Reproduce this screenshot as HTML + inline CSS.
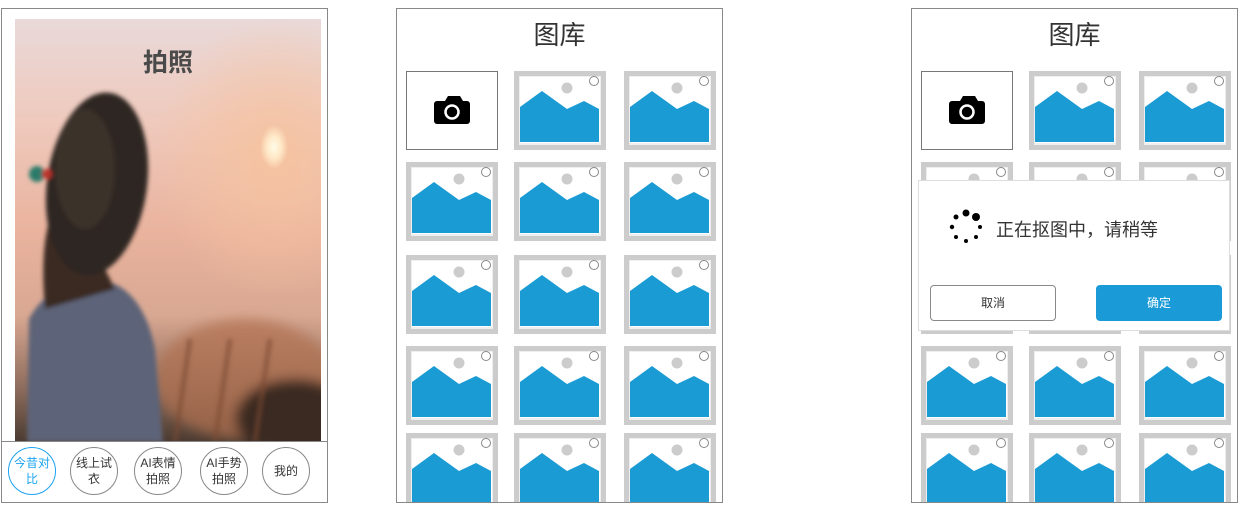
<!DOCTYPE html>
<html><head><meta charset="utf-8"><style>
*{margin:0;padding:0;box-sizing:border-box}
body{width:1242px;height:507px;background:#fff;position:relative;overflow:hidden;font-family:"Liberation Sans","Noto Sans CJK SC",sans-serif}
.panel{position:absolute;top:8px;width:327px;height:495px;border:1px solid #888;background:#fff;overflow:hidden}
.photo{position:absolute;left:13px;top:10px;width:306px;height:423px;overflow:hidden;
background:radial-gradient(ellipse 14px 22px at 259px 128px,#fffbe8 0%,#ffe9c8 50%,rgba(255,220,190,0) 100%),
radial-gradient(ellipse 120px 140px at 260px 140px,#f6c3a0 0%,rgba(240,180,150,0) 100%),
linear-gradient(180deg,#e9d9d8 0%,#efc9bc 25%,#e9b39e 50%,#d9a892 70%,#8a6a5a 88%,#4a3a30 100%)}
.title1{position:absolute;left:0;width:100%;top:24px;text-align:center;font-size:25px;font-weight:bold;color:#4a4a4a}
.nav{position:absolute;left:0;top:432px;width:100%;height:62px;border-top:1px solid #888}
.c{position:absolute;top:5px;width:48px;height:48px;border:1px solid #888;border-radius:50%;font-size:12px;line-height:16px;color:#333;display:flex;align-items:center;justify-content:center;text-align:center}
.t2{position:absolute;left:0;width:100%;top:6px;text-align:center;font-size:26px;color:#333}
.tile{position:absolute;width:92px;height:79px}
</style></head><body>
<div class="panel" style="left:1px">
 <div class="photo">
  <svg width="306" height="423" style="position:absolute;left:0;top:0">
   <defs><filter id="b"><feGaussianBlur stdDeviation="2"/></filter><filter id="b2"><feGaussianBlur stdDeviation="6"/></filter></defs>
   <g filter="url(#b2)"><ellipse cx="230" cy="360" rx="90" ry="60" fill="#b07050" opacity=".7"/><ellipse cx="280" cy="400" rx="60" ry="40" fill="#3a2a20"/></g>
   <g filter="url(#b)">
   <path d="M12 423 L14 300 Q30 270 60 266 L100 265 Q130 280 140 330 L148 423Z" fill="#5d6478"/>
   <path d="M30 290 Q25 230 35 200 L80 230 L100 270 Z" fill="#3a2a24"/>
   <ellipse cx="82" cy="165" rx="50" ry="92" fill="#2f2520" transform="rotate(8 82 165)"/>
   <ellipse cx="70" cy="150" rx="30" ry="60" fill="#3b302a"/>
   <circle cx="22" cy="155" r="8" fill="#2a7a6a"/><circle cx="32" cy="155" r="5" fill="#c0302a"/>
   </g>
   <g stroke="#7a4a30" stroke-width="5" opacity=".6" filter="url(#b)"><line x1="160" y1="423" x2="175" y2="320"/><line x1="200" y1="423" x2="215" y2="320"/><line x1="240" y1="423" x2="255" y2="320"/></g>
  </svg>
  <div class="title1">拍照</div>
 </div>
 <div class="nav">
  <div class="c" style="left:6px;border-color:#1aa3f0;color:#1aa3f0">今昔对<br>比</div>
  <div class="c" style="left:68px">线上试<br>衣</div>
  <div class="c" style="left:132px">AI表情<br>拍照</div>
  <div class="c" style="left:198px">AI手势<br>拍照</div>
  <div class="c" style="left:260px">我的</div>
 </div>
</div>
<div class="panel" style="left:396px" id="p2"><div class="t2">图库</div></div>
<div class="panel" style="left:911px" id="p3"><div class="t2">图库</div></div>
<div style="position:absolute;left:918px;top:180px;width:312px;height:151px;background:#fff;border:1px solid #ddd">
 <svg width="40" height="40" style="position:absolute;left:28px;top:27px" viewBox="0 0 40 40">
  <circle cx="19" cy="5" r="3.5"/><circle cx="29" cy="9" r="4"/><circle cx="9" cy="9" r="2.5"/><circle cx="5" cy="19" r="2.2"/><circle cx="33" cy="19" r="2"/><circle cx="9" cy="29" r="2"/><circle cx="19" cy="33" r="2"/><circle cx="29" cy="29" r="2"/>
 </svg>
 <div style="position:absolute;left:77px;top:35px;font-size:18px;color:#333">正在抠图中，请稍等</div>
 <div style="position:absolute;left:11px;top:104px;width:126px;height:36px;border:1px solid #888;border-radius:4px;font-size:12px;color:#333;text-align:center;line-height:34px">取消</div>
 <div style="position:absolute;left:177px;top:104px;width:126px;height:36px;background:#1a9bd7;border-radius:4px;font-size:12px;color:#fff;text-align:center;line-height:36px">确定</div>
</div>
<script>
var tile='<svg width="92" height="79" viewBox="0 0 92 79"><rect width="92" height="79" fill="#cccccc"/><rect x="5" y="5" width="82" height="69" fill="#eee"/><rect x="6" y="6" width="80" height="66" fill="#fff"/><polygon points="6,36 28,20 53,38 70,30 85,38 85,71 6,71" fill="#1a9bd4"/><circle cx="53" cy="17" r="5.5" fill="#ccc"/><circle cx="80" cy="10" r="4.5" fill="none" stroke="#888" stroke-width="1"/></svg>';
var cam='<svg width="92" height="79" viewBox="0 0 92 79"><rect x=".5" y=".5" width="91" height="78" fill="#fff" stroke="#777"/><path d="M31 30 h8 l3-5 h12 l3 5 h4 a3 3 0 0 1 3 3 v17 a3 3 0 0 1-3 3 h-30 a3 3 0 0 1-3-3 v-17 a3 3 0 0 1 3-3z" fill="#000"/><circle cx="46" cy="41" r="6.5" fill="none" stroke="#fff" stroke-width="2.5"/></svg>';
var rows=[62,153,246,337,424];
function fill(id,cols){var p=document.getElementById(id);rows.forEach(function(y,r){cols.forEach(function(x,c){var d=document.createElement('div');d.className='tile';d.style.left=x+'px';d.style.top=y+'px';d.innerHTML=(r==0&&c==0)?cam:tile;p.appendChild(d);});});}
fill('p2',[9,117,227]);fill('p3',[9,117,227]);
</script>
</body></html>
